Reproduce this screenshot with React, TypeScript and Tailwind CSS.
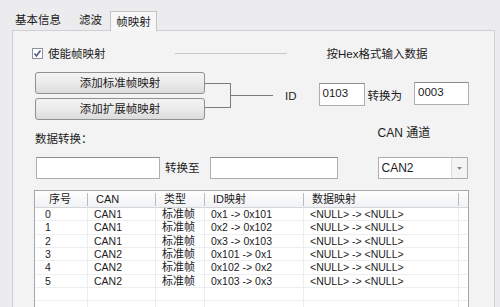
import React from 'react'

const rows = [
  ['0', 'CAN1', '标准帧', '0x1 -> 0x101', '<NULL> -> <NULL>'],
  ['1', 'CAN1', '标准帧', '0x2 -> 0x102', '<NULL> -> <NULL>'],
  ['2', 'CAN1', '标准帧', '0x3 -> 0x103', '<NULL> -> <NULL>'],
  ['3', 'CAN2', '标准帧', '0x101 -> 0x1', '<NULL> -> <NULL>'],
  ['4', 'CAN2', '标准帧', '0x102 -> 0x2', '<NULL> -> <NULL>'],
  ['5', 'CAN2', '标准帧', '0x103 -> 0x3', '<NULL> -> <NULL>'],
  ['', '', '', '', ''],
  ['', '', '', '', ''],
]

const cols = ['w-[53px]', 'w-[68px]', 'w-[49px]', 'w-[99px]', 'w-[155px]']
const heads = ['序号', 'CAN', '类型', 'ID映射', '数据映射']

function Button({ label }: { label: string }) {
  return (
    <div className="h-[22px] w-[170px] rounded-[3px] border border-[#8f9090] bg-gradient-to-b from-[#f3f3f3] via-[#ebebeb] to-[#dcdcdc] flex items-center justify-center leading-[14px]">
      {label}
    </div>
  )
}

export default function App() {
  return (
    <div className="w-[500px] h-[307px] overflow-hidden bg-[#ececee] text-[11.5px] text-[#1c1c1c] font-['Liberation_Sans','Noto_Sans_CJK_SC',sans-serif]">
      {/* tabs */}
      <div className="flex h-[30px] items-end pl-[15px]">
        <span className="mb-[3px] leading-[14px]">基本信息</span>
        <span className="ml-[18px] mb-[3px] leading-[14px]">滤波</span>
        <div className="relative z-10 ml-[8px] -mb-px h-[20px] w-[47px] border border-b-0 border-[#c4c4c8] bg-[#f7f7f8] flex items-center justify-center leading-[14px]">
          帧映射
        </div>
      </div>

      {/* page */}
      <div className="ml-[12px] w-[483px] h-[277px] border-l border-t border-r border-[#cfd0d4] bg-[#f3f3f4]">
        {/* enable row */}
        <div className="mt-[16px] h-[13px] flex items-center">
          <div className="ml-[19px] w-[11px] h-[11px] border border-[#8e8f9f] bg-white flex items-center justify-center">
            <svg width="9" height="9" viewBox="0 0 9 9">
              <polyline points="1.5,4.5 3.5,7 7.5,1.5" fill="none" stroke="#4b5b85" strokeWidth="1.6" />
            </svg>
          </div>
          <span className="ml-[5px] leading-[14px]">使能帧映射</span>
          <div className="ml-[69px] w-[112px] h-px bg-[#c8c8cc]" />
          <span className="ml-[40px] leading-[14px]">按Hex格式输入数据</span>
        </div>

        {/* buttons + id */}
        <div className="mt-[12px] flex items-start">
          <div className="ml-[22px] flex flex-col gap-[4px]">
            <Button label="添加标准帧映射" />
            <Button label="添加扩展帧映射" />
          </div>
          <div className="mt-[11px] w-[26px] h-[25px] border-y border-r border-[#7c7c7c]" />
          <div className="mt-[23px] w-[42px] h-px bg-[#7c7c7c]" />
          <span className="ml-[12px] mt-[17px] leading-[14px]">ID</span>
          <div className="ml-[22px] mt-[11px] w-[46px] h-[23px] border border-[#abadb3] border-t-[#8b8d94] bg-white pl-[3px] pt-[2px] leading-[14px]">0103</div>
          <span className="ml-[3px] mt-[17px] leading-[14px]">转换为</span>
          <div className="ml-[12px] mt-[10px] w-[55px] h-[23px] border border-[#abadb3] border-t-[#8b8d94] bg-white pl-[3px] pt-[2px] leading-[14px]">0003</div>
        </div>

        {/* labels */}
        <div className="flex items-start">
          <span className="ml-[22px] mt-[12px] leading-[14px]">数据转换：</span>
          <span className="ml-[285px] mt-[6px] leading-[14px] text-[12px]">CAN 通道</span>
        </div>

        {/* conversion inputs */}
        <div className="mt-[11px] h-[22px] flex items-center">
          <div className="ml-[23px] w-[124px] h-[22px] border border-[#abadb3] border-t-[#8b8d94] bg-white" />
          <span className="ml-[5px] leading-[14px]">转换至</span>
          <div className="ml-[10px] w-[128px] h-[22px] border border-[#abadb3] border-t-[#8b8d94] bg-white" />
          <div className="ml-[40px] w-[90px] h-[22px] border border-[#abadb3] bg-white flex">
            <span className="flex-1 pl-[3px] leading-[20px] text-[12px]">CAN2</span>
            <div className="w-[16px] h-full border-l border-[#dcdcdc] bg-[#f4f4f4] flex items-center justify-center">
              <svg width="5" height="3" viewBox="0 0 5 3">
                <polygon points="0,0 5,0 2.5,3" fill="#8a8a8a" />
              </svg>
            </div>
          </div>
        </div>

        {/* list */}
        <div className="mt-[11px] ml-[21px] w-[435px] h-[120px] border border-[#a5a7ab] bg-white text-[10.5px]">
          <div className="flex h-[17px] border-b border-[#d5d5d8] bg-gradient-to-b from-white to-[#f0f1f3] text-[11px]">
            {heads.map((h, i) => (
              <div key={h} className={`${cols[i]} relative flex items-center leading-[14px] ${i === 0 ? 'pl-[14px]' : 'pl-[8px]'}`}>
                {h}
                <div className="absolute right-0 top-[2px] h-[13px] w-px bg-[#b9bbbf]" />
              </div>
            ))}
            <div className="flex-1" />
          </div>
          {rows.map((r, ri) => (
            <div key={ri} className="flex h-[13.33px] border-b border-[#eeeeee]">
              {r.map((c, ci) => (
                <div key={ci} className={`${cols[ci]} h-full border-r border-[#ededed] flex items-center leading-[12px] whitespace-nowrap ${ci === 0 ? 'pl-[10px]' : 'pl-[6px]'} ${ci === 2 ? 'text-[11px]' : ''}`}>
                  {c}
                </div>
              ))}
              <div className="flex-1" />
            </div>
          ))}
        </div>
      </div>
    </div>
  )
}
